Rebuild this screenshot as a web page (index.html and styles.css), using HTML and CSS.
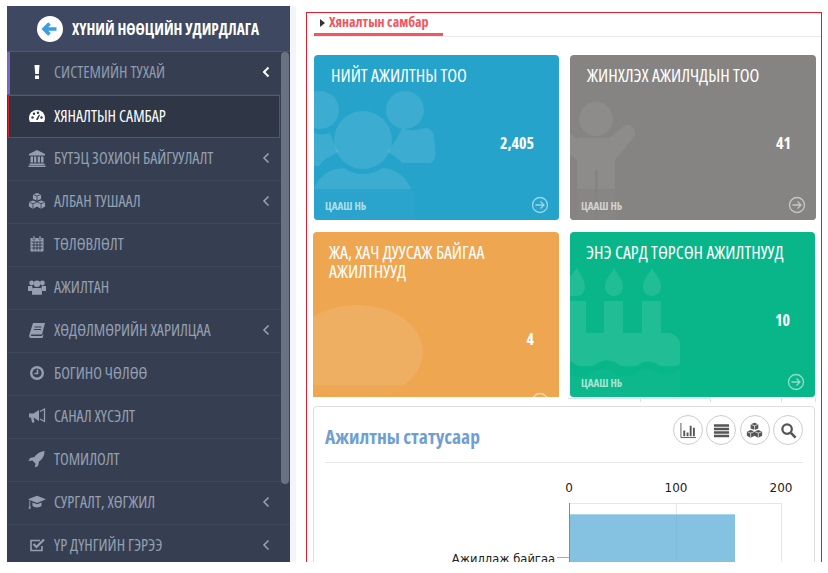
FILE: index.html
```html
<!DOCTYPE html>
<html lang="mn">
<head>
    <meta charset="UTF-8">
    <meta name="viewport" content="width=device-width, initial-scale=1.0">
    <title>Хяналтын самбар</title>
    <link rel="stylesheet" href="styles.css">
</head>
<body>
    <div class="app">
        <!-- Зүүн цэс -->
        <aside class="sidebar">
            <div class="sidebar-head">
                <svg class="back-icon" viewBox="0 0 26 26"><circle cx="13" cy="13" r="13" fill="#fff"/><path d="M19.5 13H8M12.5 7.500 7 13l5.500 5.500" fill="none" stroke="#3c9ee0" stroke-width="3.600"/></svg>
                <span>ХҮНИЙ НӨӨЦИЙН УДИРДЛАГА</span>
            </div>
            <ul class="menu">
                <li class="menu-item first">
                    <svg class="ico" viewBox="0 0 18 18"><path d="M6.500 2h5l-.7 9H7.200zM7 12.500h4V16H7z" fill="#fff"/></svg>
                    <span class="label">СИСТЕМИЙН ТУХАЙ</span>
                    <svg class="chev bright" viewBox="0 0 8 12"><path d="M6.500 1.500 2 6l4.500 4.500" fill="none" stroke="currentColor" stroke-width="2"/></svg>
                </li>
                <li class="menu-item active">
                    <svg class="ico" viewBox="0 0 18 18"><path d="M9 3a8 8 0 0 0-8 8c0 1.500.4 2.800 1 4h14c.6-1.200 1-2.500 1-4a8 8 0 0 0-8-8z" fill="#fff"/><g fill="#2f3747"><circle cx="4.500" cy="10.500" r="1.200"/><circle cx="6" cy="6.800" r="1.200"/><circle cx="10" cy="5.800" r="1.200"/><circle cx="13.500" cy="10.500" r="1.200"/><path d="m8 12.500 3-5 1 .5-2.300 5.300z"/></g></svg>
                    <span class="label">ХЯНАЛТЫН САМБАР</span>
                </li>
                <li class="menu-item">
                    <svg class="ico" viewBox="0 0 18 18"><path d="M9 1 1 5v1.500h16V5zM2.500 7.500h2.500v6H2.500zM6 7.500h2.300v6H6zM9.700 7.500H12v6H9.700zM13 7.500h2.500v6H13zM1.500 14.500h15V16h-15zM.5 16.500h17V18H.5z" fill="currentColor"/></svg>
                    <span class="label">БҮТЭЦ ЗОХИОН БАЙГУУЛАЛТ</span>
                    <svg class="chev" viewBox="0 0 8 12"><path d="M6.500 1.500 2 6l4.500 4.500" fill="none" stroke="currentColor" stroke-width="1.600"/></svg>
                </li>
                <li class="menu-item">
                    <svg class="ico" viewBox="0 0 20 18"><path d="m10 0 4.500 1.700v5L10 8.500 5.500 6.700v-5zM5.500 8.500l4.500 1.700v5L5.500 17.500 1 15.200v-5zM14.500 8.500l4.500 1.700v5l-4.500 2.300-4.500-2.300v-5z" fill="currentColor"/><path d="m5.500 1.700 4.500 1.800 4.500-1.800M1 10.200 5.500 12l4.500-1.800M10 10.200l4.500 1.800 4.500-1.800M10 3.500v5M5.500 12v5.500M14.500 12v5.500" fill="none" stroke="#363f51" stroke-width=".9"/></svg>
                    <span class="label">АЛБАН ТУШААЛ</span>
                    <svg class="chev" viewBox="0 0 8 12"><path d="M6.500 1.500 2 6l4.500 4.500" fill="none" stroke="currentColor" stroke-width="1.600"/></svg>
                </li>
                <li class="menu-item">
                    <svg class="ico" viewBox="0 0 18 18"><path d="M2.500 3h13v13.500h-13z" fill="currentColor"/><path d="M3.500 7h11M3.500 10h11M3.500 13h11M6 7v8.500M9 7v8.500M12 7v8.500" stroke="#363f51" fill="none"/><path d="M5 1h2v4H5zM11 1h2v4h-2z" fill="currentColor" stroke="#363f51" stroke-width=".6"/></svg>
                    <span class="label">ТӨЛӨВЛӨЛТ</span>
                </li>
                <li class="menu-item">
                    <svg class="ico" viewBox="0 0 20 18"><g fill="currentColor"><circle cx="4" cy="4.500" r="2.700"/><circle cx="16" cy="4.500" r="2.700"/><circle cx="10" cy="5.500" r="3.600"/><path d="M0 8h4.500l1 3.500L4 13.500H0zM20 8h-4.500l-1 3.500 1.500 2h4zM6 10h8l1.500 2.500V17.500h-11v-5z"/></g></svg>
                    <span class="label">АЖИЛТАН</span>
                </li>
                <li class="menu-item">
                    <svg class="ico" viewBox="0 0 18 18"><path d="M5 2h12l-3 11.500H3.500c-.8 0-1 1.500 0 1.500H14l.8-1.500.7.500-1 3H3C1.500 17 .8 15.500 1.300 14z" fill="currentColor"/><path d="M6.500 6h7M6 8.500h7" stroke="#363f51"/></svg>
                    <span class="label">ХӨДӨЛМӨРИЙН ХАРИЛЦАА</span>
                    <svg class="chev" viewBox="0 0 8 12"><path d="M6.500 1.500 2 6l4.500 4.500" fill="none" stroke="currentColor" stroke-width="1.600"/></svg>
                </li>
                <li class="menu-item">
                    <svg class="ico" viewBox="0 0 18 18"><circle cx="9" cy="9" r="5.800" fill="none" stroke="currentColor" stroke-width="2.400"/><path d="M9.500 5.500v4H6.500" fill="none" stroke="currentColor" stroke-width="1.600"/></svg>
                    <span class="label">БОГИНО ЧӨЛӨӨ</span>
                </li>
                <li class="menu-item">
                    <svg class="ico" viewBox="0 0 18 18"><path d="M1 6.500h4.500L11 3v11L5.500 10.500l1 5H4l-1-5H1z" fill="currentColor"/><path d="M12 4.500 16.500 2v12.500L12 12" fill="none" stroke="currentColor" stroke-width="1.300"/></svg>
                    <span class="label">САНАЛ ХҮСЭЛТ</span>
                </li>
                <li class="menu-item">
                    <svg class="ico" viewBox="0 0 18 18"><path d="M16.500 1C12 1.500 8.500 4 6.500 7L2 8 .5 11l4-.5 3 3-.5 4 3-1.500 1-4.500c3-2 5.500-5.500 5.500-10z" fill="currentColor"/></svg>
                    <span class="label">ТОМИЛОЛТ</span>
                </li>
                <li class="menu-item">
                    <svg class="ico" viewBox="0 0 20 18"><path d="M10 2 0 6l10 4 10-4z" fill="currentColor"/><path d="M5 9.500v4c2.500 2 7.500 2 10 0v-4l-5 2zM1.500 7v6l-1 3.500h2.500L2.500 13V7.300z" fill="currentColor"/></svg>
                    <span class="label">СУРГАЛТ, ХӨГЖИЛ</span>
                    <svg class="chev" viewBox="0 0 8 12"><path d="M6.500 1.500 2 6l4.500 4.500" fill="none" stroke="currentColor" stroke-width="1.600"/></svg>
                </li>
                <li class="menu-item">
                    <svg class="ico" viewBox="0 0 18 18"><path d="M14 10v4.500H3v-10h9" fill="none" stroke="currentColor" stroke-width="1.600"/><path d="m5.500 8 3 3L16 3.500" fill="none" stroke="currentColor" stroke-width="2.200"/></svg>
                    <span class="label">ҮР ДҮНГИЙН ГЭРЭЭ</span>
                    <svg class="chev" viewBox="0 0 8 12"><path d="M6.500 1.500 2 6l4.500 4.500" fill="none" stroke="currentColor" stroke-width="1.600"/></svg>
                </li>
            </ul>
            <div class="scroll-thumb"></div>
        </aside>

        <div class="gutter"></div>

        <!-- Үндсэн хэсэг -->
        <main class="content">
            <div class="tabs">
                <span class="tab"><i class="tab-arrow"></i>Хяналтын самбар</span>
            </div>

            <section class="cards">
                <div class="card blue">
                    <svg class="mark" viewBox="0 0 245 165"><g fill="#fff" fill-opacity=".1"><circle cx="6" cy="55" r="19"/><circle cx="91" cy="55" r="19"/><path d="M88 73c7 3 14 3 22 0 6 0 10 3 10 10 1 8 2 14 1 19-1 4-3 6-7 6H88c-4-5-9-9-15-11 6-7 10-13 15-24z"/><path d="M0 77c4 3 10 3 16 1 4 8 4 13 9 19-8 3-15 7-20 14H0z"/><circle cx="49" cy="85" r="29"/><path d="M0 165v-32c5-12 15-19 30-20 6 4 12 6 19 6s14-2 19-6c20 1 33 18 33 40v12z"/></g></svg>
                    <h3 class="card-title">НИЙТ АЖИЛТНЫ ТОО</h3>
                    <div class="card-num">2,405</div>
                    <div class="card-foot"><span>ЦААШ НЬ</span><svg class="go" viewBox="0 0 18 18"><circle cx="9" cy="9" r="7.500"/><path d="M4.500 9h8.500M9.500 5.500 13 9l-3.500 3.500"/></svg></div>
                </div>
                <div class="card gray">
                    <svg class="mark" viewBox="0 0 246 165"><g fill="#fff" fill-opacity=".07"><circle cx="26" cy="64" r="17"/><path d="M7 85-5 72-5 95 7 105v60h18v-50h3v50h17v-60l19-23c5-7-5-16-11-10L39 83H7z"/></g></svg>
                    <h3 class="card-title">ЖИНХЛЭХ АЖИЛЧДЫН ТОО</h3>
                    <div class="card-num">41</div>
                    <div class="card-foot"><span>ЦААШ НЬ</span><svg class="go" viewBox="0 0 18 18"><circle cx="9" cy="9" r="7.500"/><path d="M4.500 9h8.500M9.500 5.500 13 9l-3.500 3.500"/></svg></div>
                </div>
                <div class="card orange wide-left">
                    <svg class="mark" viewBox="0 0 246 165"><ellipse cx="44" cy="120" rx="66" ry="47" fill="#fff" fill-opacity=".1"/></svg>
                    <h3 class="card-title">ЖА, ХАЧ ДУУСАЖ БАЙГАА АЖИЛТНУУД</h3>
                    <div class="card-num">4</div>
                    <div class="card-foot"><span>ЦААШ НЬ</span><svg class="go" viewBox="0 0 18 18"><circle cx="9" cy="9" r="7.500"/><path d="M4.500 9h8.500M9.500 5.500 13 9l-3.500 3.500"/></svg></div>
                </div>
                <div class="card green narrow-right">
                    <svg class="mark" viewBox="0 0 245 165"><g fill="#fff" fill-opacity=".1"><path d="M7 36c3 6 8 11 8 19 0 5-4 9-8 9H0V45zM44 36c3 6 9 11 9 19 0 5-4 9-9 9s-9-4-9-9c0-8 6-13 9-19zM82 36c3 6 9 11 9 19 0 5-4 9-9 9s-9-4-9-9c0-8 6-13 9-19zM0 69h16v32H0zM34 69h19v32H34zM72 69h19v32H72zM0 101h98c7 0 12 5 12 12v19c-8 5-12 6-18 3-8-5-14-8-22-3-8 5-14 5-22 0-8-5-14-5-22 0-8 5-14 5-26-3zM0 142c8 4 14 4 22-1 8-5 14-5 22 0 8 5 14 5 22 0 8-5 14-5 22 0 8 4 14 2 22-3v27H0z"/></g></svg>
                    <h3 class="card-title">ЭНЭ САРД ТӨРСӨН АЖИЛТНУУД</h3>
                    <div class="card-num">10</div>
                    <div class="card-foot"><span>ЦААШ НЬ</span><svg class="go" viewBox="0 0 18 18"><circle cx="9" cy="9" r="7.500"/><path d="M4.500 9h8.500M9.500 5.500 13 9l-3.500 3.500"/></svg></div>
                </div>
            </section>

            <div class="sliver"></div>

            <section class="panel">
                <div class="panel-head">
                    <h2 class="panel-title">Ажилтны статусаар</h2>
                    <div class="tools">
                        <button class="tool"><svg viewBox="0 0 18 18"><path d="M1 1v15.500h16" fill="none" stroke="#555" stroke-width="1"/><path d="M3.500 9h2v6h-2zM7 11h2v4H7zM10.300 4h2v11h-2zM13.700 6h2v9h-2z" fill="#555"/></svg></button>
                        <button class="tool"><svg viewBox="0 0 18 18"><path d="M1 2.500h16v2.600H1zM1 6.200h16v2.600H1zM1 9.900h16v2.600H1zM1 13.600h16v2.600H1z" fill="#555"/></svg></button>
                        <button class="tool"><svg viewBox="0 0 20 18"><path d="m10 0 4.500 1.700v5L10 8.500 5.500 6.700v-5zM5.500 8.500l4.500 1.700v5L5.500 17.500 1 15.200v-5zM14.500 8.500l4.500 1.700v5l-4.500 2.300-4.500-2.300v-5z" fill="#555"/><path d="m5.500 1.700 4.500 1.800 4.500-1.800M1 10.200 5.500 12l4.500-1.800M10 10.200l4.500 1.800 4.500-1.800M10 3.500v5M5.500 12v5.500M14.500 12v5.500" fill="none" stroke="#fff" stroke-width=".8"/></svg></button>
                        <button class="tool"><svg viewBox="0 0 18 18"><circle cx="7.500" cy="7.500" r="5" fill="none" stroke="#555" stroke-width="2.400"/><path d="m11.500 11.500 5 5" stroke="#555" stroke-width="2.800"/></svg></button>
                    </div>
                </div>
                <svg class="chart" width="478" height="100" viewBox="0 0 478 100">
                    <g class="axis-label" text-anchor="middle">
                        <text x="244" y="29">0</text>
                        <text x="351" y="29">100</text>
                        <text x="456" y="29">200</text>
                    </g>
                    <rect x="244.500" y="40.500" width="212" height="70" fill="#fff" stroke="#e6e6e6"/>
                    <line x1="351.500" y1="40" x2="351.500" y2="100" stroke="#e6e6e6"/>
                    <rect x="245" y="51" width="165" height="60" fill="#85c2e2"/>
                    <rect x="245" y="51" width="165" height="1" fill="#a9d5ec"/>
                    <line x1="351.500" y1="52" x2="351.500" y2="100" stroke="#7db6d4" stroke-opacity=".5"/>
                    <line x1="244.500" y1="40" x2="244.500" y2="100" stroke="#888"/>
                    <line x1="232" y1="94.500" x2="244" y2="94.500" stroke="#aaa"/>
                    <text class="axis-label bar-name" x="230" y="100" text-anchor="end">Ажиллаж байгаа</text>
                </svg>
            </section>
        </main>
    </div>
</body>
</html>
```

FILE: styles.css
```css
* {
    box-sizing: border-box;
}
html, body {
    margin: 0;
    height: 100%;
    background: #fff;
    overflow: hidden;
}
body {
    font-family: "Open Sans", "Liberation Sans", sans-serif;
    font-stretch: 75%;
}
.app {
    display: flex;
    height: 556px;
    margin-top: 6px;
    padding-left: 7px;
    overflow: hidden;
}

/* sidebar */
.sidebar {
    position: relative;
    width: 283px;
    flex: none;
    background: #363f51;
    overflow: hidden;
}
.sidebar-head {
    display: flex;
    align-items: center;
    gap: 9px;
    height: 46px;
    padding: 0 0 0 30px;
    background: #3e4860;
    border-bottom: 1px solid #4d5880;
    color: #fff;
    font-size: 15.300px;
    font-weight: bold;
}
.back-icon {
    width: 26px;
    height: 26px;
    flex: none;
}
.menu {
    list-style: none;
    margin: 0;
    padding: 0;
}
.menu-item {
    display: flex;
    align-items: center;
    height: 43px;
    padding: 0 20px 2px 21px;
    border-bottom: 1px solid #3e485b;
    color: #94a0b2;
    font-size: 16px;
}
.menu-item.first {
    border-left: 3px solid #7a68c0;
    padding-left: 18px;
    color: #8f9bae;
}
.menu-item.active {
    width: 272px;
    margin-left: 1px;
    padding-left: 19px;
    background: #2f3747;
    border: 1px solid #d8212f;
    color: #fff;
}
.ico {
    width: 18px;
    height: 18px;
    flex: none;
    margin-right: 8px;
}
.label {
    flex: 1;
    white-space: nowrap;
}
.chev {
    width: 8px;
    height: 12px;
    flex: none;
}
.chev.bright {
    color: #fff;
}
.scroll-thumb {
    position: absolute;
    top: 46px;
    right: 1px;
    width: 8px;
    height: 432px;
    border-radius: 4px;
    background: #697280;
}
.gutter {
    width: 6px;
    flex: none;
    background: #f3f5f9;
}

/* main */
.content {
    width: 516px;
    height: 551px;
    flex: none;
    margin: 6px 0 0 10px;
    padding: 0 0 0 7px;
    border: 1px solid #e51c2c;
    overflow: hidden;
}
.tabs {
    height: 24px;
    border-bottom: 1px solid #eaeaea;
}
.tab {
    display: block;
    width: 129px;
    height: 23px;
    padding-left: 6px;
    border-bottom: 3px solid #f2565f;
    color: #f2565f;
    font-size: 14px;
    font-weight: bold;
    line-height: 18px;
    white-space: nowrap;
}
.tab-arrow {
    display: inline-block;
    width: 0;
    height: 0;
    margin-right: 4px;
    border-left: 5px solid #333;
    border-top: 4px solid transparent;
    border-bottom: 4px solid transparent;
}
.cards {
    display: grid;
    grid-template-columns: 245px 246px;
    grid-auto-rows: 165px;
    gap: 12px 11px;
    margin-top: 18px;
}
.card {
    position: relative;
    display: flex;
    flex-direction: column;
    border-radius: 4px 4px 0 0;
    overflow: hidden;
    color: #fff;
}
.card.blue, .card.gray, .card.green {
    border-radius: 4px;
}
.blue { background: #26a3cb; --foot: rgba(38, 163, 203, .8); }
.gray { background: #868482; --foot: rgba(134, 132, 130, .8); }
.orange { background: #eea651; --foot: rgba(238, 166, 81, .8); }
.green { background: #08b689; --foot: rgba(8, 182, 137, .8); }
.wide-left {
    margin-left: -1px;
}
.narrow-right {
    margin-right: 1px;
}
.mark {
    position: absolute;
    left: 0;
    top: 0;
    width: 100%;
    height: 100%;
}
.card-title {
    position: relative;
    margin: 0;
    padding: 11px 17px 0;
    font-size: 18px;
    font-weight: normal;
    line-height: 19px;
}
.wide-left .card-title, .narrow-right .card-title {
    padding-left: 16px;
}
.card-num {
    position: relative;
    height: 104px;
    padding: 48px 25px 0 0;
    text-align: right;
    font-size: 16px;
    font-weight: bold;
    line-height: 20px;
    flex: none;
}
.card-foot {
    position: relative;
    flex: none;
    display: flex;
    align-items: center;
    justify-content: space-between;
    height: 31px;
    padding: 0 10px 0 11px;
    background: var(--foot);
    color: rgba(255, 255, 255, .65);
    font-size: 11px;
    font-weight: bold;
}
.card-foot span {
    padding-top: 2px;
}
.go {
    width: 18px;
    height: 18px;
    fill: none;
    stroke: rgba(255, 255, 255, .55);
    stroke-width: 1.300;
}
.sliver {
    height: 9px;
    background:
        linear-gradient(#cfe8f3, #cfe8f3) no-repeat 254px 1px / 143px 1px,
        linear-gradient(#ddd, #ddd) no-repeat 326px 1px / 1px 4px,
        linear-gradient(#ddd, #ddd) no-repeat 396px 1px / 1px 4px,
        linear-gradient(#ddd, #ddd) no-repeat 467px 1px / 1px 4px,
        linear-gradient(#ddd, #ddd) no-repeat 501px 1px / 1px 4px;
}
.panel {
    width: 502px;
    height: 300px;
    margin-left: -1px;
    padding: 0 11px;
    border: 1px solid #ddd;
    border-radius: 4px;
}
.panel-head {
    display: flex;
    justify-content: space-between;
    height: 56px;
    border-bottom: 1px solid #e8e8e8;
}
.panel-title {
    margin: 17px 0 0;
    color: #6f9fd2;
    font-size: 19.500px;
    font-weight: bold;
    line-height: 26px;
}
.tools {
    display: flex;
    gap: 3.300px;
    padding-top: 8px;
}
.tool {
    display: flex;
    align-items: center;
    justify-content: center;
    width: 30px;
    height: 30px;
    padding: 0;
    border: 1px solid #ccc;
    border-radius: 50%;
    background: #fff;
}
.tool svg {
    width: 17px;
    height: 17px;
}
.chart {
    display: block;
}
.axis-label, .axis-label text {
    font-family: "DejaVu Sans", sans-serif;
    font-stretch: normal;
    font-size: 12px;
    fill: #222;
}
.axis-label.bar-name {
    font-size: 11.500px;
}
```
